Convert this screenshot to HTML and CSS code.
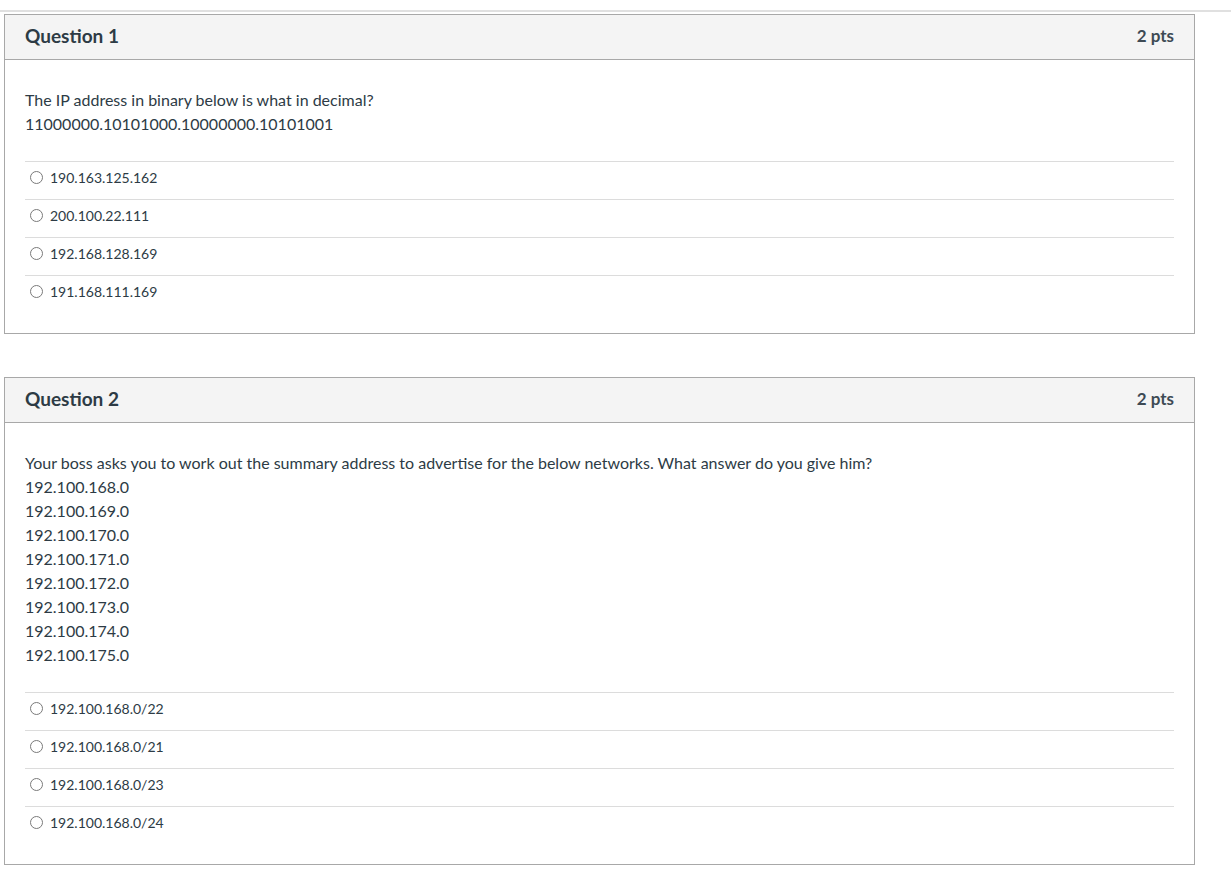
FILE: index.html
```html
<!DOCTYPE html>
<html>
<head>
<meta charset="utf-8">
<link rel="stylesheet" href="styles.css">
</head>
<body>
<div class="topline"></div>
<div class="question q1">
  <div class="qhead"><span class="qtitle">Question 1</span><span class="pts">2 pts</span></div>
  <div class="qbody">
    <div class="qtext">
      <p>The IP address in binary below is what in decimal?</p>
      <p>11000000.10101000.10000000.10101001</p>
    </div>
    <div class="answers">
      <label class="answer"><span class="radio"></span><span>190.163.125.162</span></label>
      <label class="answer"><span class="radio"></span><span>200.100.22.111</span></label>
      <label class="answer"><span class="radio"></span><span>192.168.128.169</span></label>
      <label class="answer"><span class="radio"></span><span>191.168.111.169</span></label>
    </div>
  </div>
</div>
<div class="question q2">
  <div class="qhead"><span class="qtitle">Question 2</span><span class="pts">2 pts</span></div>
  <div class="qbody">
    <div class="qtext">
      <p>Your boss asks you to work out the summary address to advertise for the below networks. What answer do you give him?</p>
      <p>192.100.168.0</p>
      <p>192.100.169.0</p>
      <p>192.100.170.0</p>
      <p>192.100.171.0</p>
      <p>192.100.172.0</p>
      <p>192.100.173.0</p>
      <p>192.100.174.0</p>
      <p>192.100.175.0</p>
    </div>
    <div class="answers">
      <label class="answer"><span class="radio"></span><span>192.100.168.0/22</span></label>
      <label class="answer"><span class="radio"></span><span>192.100.168.0/21</span></label>
      <label class="answer"><span class="radio"></span><span>192.100.168.0/23</span></label>
      <label class="answer"><span class="radio"></span><span>192.100.168.0/24</span></label>
    </div>
  </div>
</div>
</body>
</html>
```
FILE: styles.css
```css
html, body {
  margin: 0;
  padding: 0;
  background: #fff;
}
body {
  font-family: Lato, "Liberation Sans", sans-serif;
  color: #2d3b45;
}
.topline {
  margin-top: 10px;
  height: 2px;
  background: #e0e0e0;
}
.question {
  margin-left: 4px;
  width: 1189px;
  border: 1px solid #a8a8a8;
}
.q1 {
  margin-top: 2px;
}
.q2 {
  margin-top: 43px;
}
.qhead {
  height: 44px;
  box-sizing: border-box;
  background: #f4f4f4;
  border-bottom: 1px solid #a8a8a8;
  display: flex;
  align-items: center;
  justify-content: space-between;
  padding: 0 20px 4px 20px;
  height: 45px;
}
.qtitle {
  font-size: 19px;
  font-weight: 700;
}
.pts {
  font-size: 17px;
  font-weight: 700;
  color: #3d4a54;
}
.qbody {
  padding: 28px 20px 20px 20px;
}
.qtext p {
  margin: 0;
  font-size: 16px;
  line-height: 24px;
}
.answers {
  margin-top: 25px;
}
.answer {
  display: flex;
  align-items: center;
  border-top: 1px solid #dcdcdc;
  font-size: 14px;
  padding-left: 5px;
  padding-bottom: 6px;
  box-sizing: border-box;
  height: 38px;
}
.radio {
  width: 11px;
  height: 11px;
  border: 1px solid #7a7a7a;
  border-radius: 50%;
  margin-right: 7px;
  flex: none;
}
```
